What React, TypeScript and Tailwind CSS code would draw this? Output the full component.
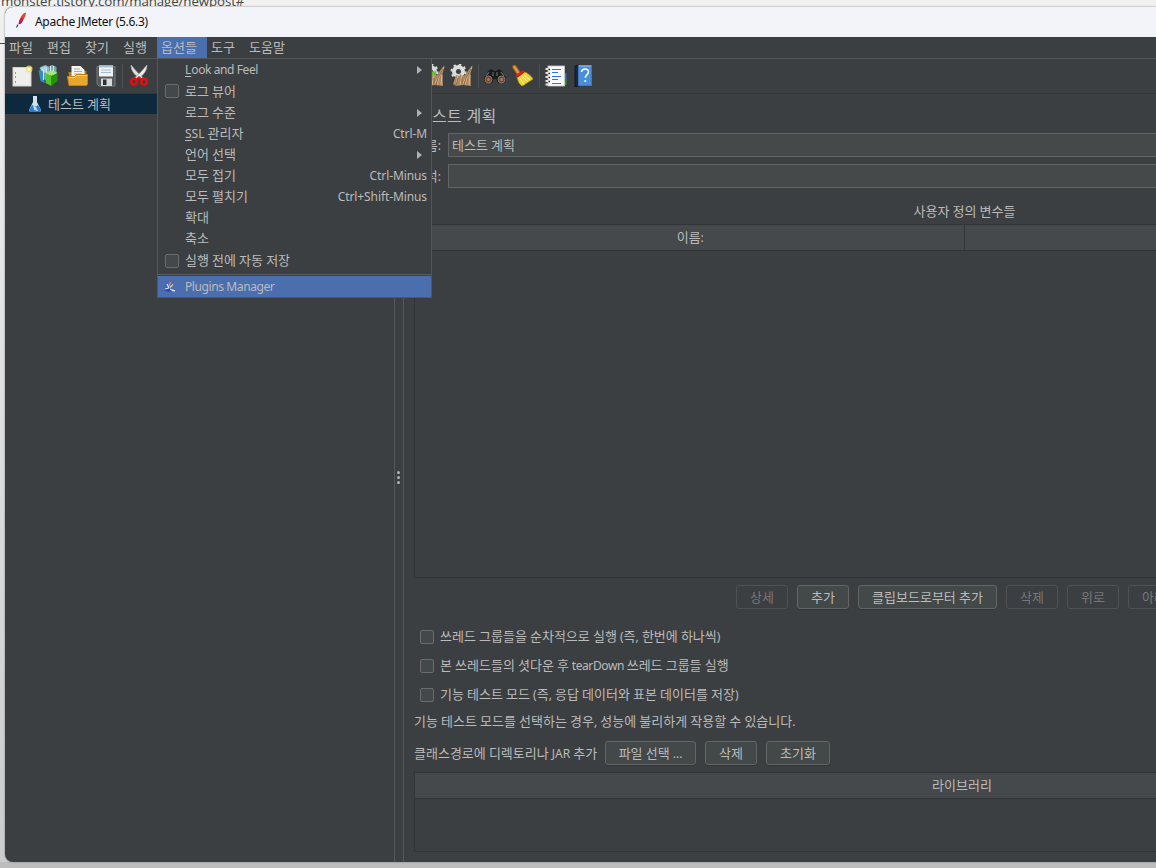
import type { ReactNode } from "react";
import clsx from "clsx";

const sans = "font-['Noto_Sans','Noto_Sans_CJK_KR',sans-serif]";

const menus = ["파일", "편집", "찾기", "실행", "옵션들", "도구", "도움말"];

type Item = {
  label: string;
  mnemonic?: boolean;
  shortcut?: string;
  submenu?: boolean;
  check?: boolean;
  height: string;
};

const items: Item[] = [
  { label: "Look and Feel", mnemonic: true, submenu: true, height: "h-[21px]" },
  { label: "로그 뷰어", check: true, height: "h-[22px]" },
  { label: "로그 수준", submenu: true, height: "h-[21px]" },
  { label: "SSL 관리자", mnemonic: true, shortcut: "Ctrl-M", height: "h-[21px]" },
  { label: "언어 선택", submenu: true, height: "h-[21px]" },
  { label: "모두 접기", shortcut: "Ctrl-Minus", height: "h-[21px]" },
  { label: "모두 펼치기", shortcut: "Ctrl+Shift-Minus", height: "h-[21px]" },
  { label: "확대", height: "h-[21px]" },
  { label: "축소", height: "h-[21px]" },
  { label: "실행 전에 자동 저장", check: true, height: "h-[23px]" },
];

// Hangul is drawn one pixel larger than the latin text around it
function Text({ children }: { children: string }) {
  return (
    <span className="inline-block text-[13px] leading-4 whitespace-pre">
      {children.split(/([\uac00-\ud7a3]+)/).map((part, i) => (
        <span
          key={i}
          className={clsx(i % 2 ? "text-[13px]" : "text-[12px]", /[a-z]{3}/.test(part) && "tracking-[-0.4px]")}
        >
          {part}
        </span>
      ))}
    </span>
  );
}

function Svg({ children }: { children: ReactNode }) {
  return (
    <svg width="24" height="24" viewBox="0 0 24 24" className="shrink-0">
      {children}
    </svg>
  );
}

function Cell({ children }: { children: ReactNode }) {
  return <div className="flex w-7 shrink-0 justify-center">{children}</div>;
}

function Divider() {
  return (
    <div className="flex w-[5px] shrink-0 justify-center">
      <div className="h-6 w-px bg-[#515151]" />
    </div>
  );
}

function Feather() {
  return (
    <svg width="12" height="17" viewBox="0 0 12 17" className="-mt-[3px]">
      <path d="M10.5 1C8 1.500 6 4 4 9.500l-.3 2.300 2 .2C8 9 9.500 6 10.500 1z" fill="#d22128" />
      <path d="M10.700 .5C8.500 1.500 7 3 6 5.500l3 .8C10.300 4 11 2.500 10.700.5z" fill="#e8452c" />
      <path d="M4.500 8 3.500 11.800l2.200.4L7.500 9z" fill="#a3246a" />
      <path d="m3 12.500-1.500 3" stroke="#4b3a8c" strokeWidth="1.200" />
    </svg>
  );
}

function NewIcon() {
  return (
    <Svg>
      <rect x="3" y="3.500" width="18" height="18.500" fill="#eeeeec" stroke="#d0d0cc" />
      <path d="M5.500 8v2M5.500 12v2M5.500 17v2" stroke="#999" />
      <circle cx="19" cy="5" r="3.500" fill="#f3e060" opacity=".75" />
      <circle cx="19" cy="5" r="1.700" fill="#fffbd0" />
    </Svg>
  );
}

function TemplatesIcon() {
  return (
    <Svg>
      <g transform="translate(-1.500 -1)">
        <path d="m4 4 5-2 4 2v11l-4 2-5-3z" fill="#86b4c2" />
        <path d="m13 3 3-1 4 2v8h-8z" fill="#7ba5ad" />
        <path d="M2 7 8 9v11l-4-2z" fill="#2f8fc8" />
        <path d="m3 5 6-2 1 5-2 2z" fill="#a9d2e2" />
        <path d="m5 6 2 1v10M10 4v6M14 3v5M17 3v5" stroke="#d4e7ec" fill="none" />
        <path d="m9 10 7-3 5 3-6 3z" fill="#a6e877" />
        <path d="m9 10 6 3v10l-6-3z" fill="#55c52c" />
        <path d="m15 13 6-3v8l-6 5z" fill="#259409" />
      </g>
    </Svg>
  );
}

function OpenIcon() {
  return (
    <Svg>
      <g transform="translate(-.5 -1)">
        <path d="M3 9h4v-1h14v14H4z" fill="#b77912" />
        <path d="M6 3h9l4 4v9H6z" fill="#f3f3f1" />
        <path d="M8.500 6h6M8.500 8.500h8M8.500 11h8" stroke="#aaaaa8" />
        <path d="M2 13.500h7l2-2h11V21l-1 1.500H3.500z" fill="#e9a62d" stroke="#c48212" />
        <path d="M3 14.500h6.500l2-2h10" stroke="#fbd278" fill="none" />
      </g>
    </Svg>
  );
}

function SaveIcon() {
  return (
    <Svg>
      <g transform="translate(0 -.5)">
        <path d="M3 3h18v19.500H5L3 20.500z" fill="#54585a" stroke="#797d7e" />
        <rect x="5" y="2" width="14" height="11" fill="#f0f3f5" />
        <path d="M5 3h14" stroke="#a9c2da" strokeWidth="2" />
        <path d="M7 6.500h10M7 9h10" stroke="#a9bccb" />
        <rect x="7" y="15" width="11" height="7.500" fill="#d7d9d9" />
        <rect x="9" y="16" width="3.500" height="5.500" fill="#2e3133" />
      </g>
    </Svg>
  );
}

function CutIcon() {
  return (
    <Svg>
      <path d="M4 1c0 6 4 10 8 13l3 2 1.500-2C12 10 8 6 4 1z" fill="#dfe1e1" stroke="#a5a8a8" strokeWidth=".7" />
      <path d="M20 1c0 6-4 10-8 13l-3 2-1.500-2C12 10 16 6 20 1z" fill="#eff0f0" stroke="#a5a8a8" strokeWidth=".7" />
      <ellipse cx="7" cy="17.700" rx="2.800" ry="3" fill="none" stroke="#dc1010" strokeWidth="2.800" />
      <ellipse cx="17" cy="17.700" rx="2.800" ry="3" fill="none" stroke="#dc1010" strokeWidth="2.800" />
      <path d="m9 16 3-2.500 3 2.500" stroke="#dc1010" strokeWidth="2.200" fill="none" />
    </Svg>
  );
}

function ClearIcon({ green }: { green?: boolean }) {
  return (
    <Svg>
      <circle cx="8.500" cy="7.500" r="4.500" fill="none" stroke="#dadcd9" strokeWidth="4" />
      <circle cx="8.500" cy="7.500" r="7" fill="none" stroke="#dadcd9" strokeWidth="2" strokeDasharray="2.500 3" />
      {green && <path d="m7 8 7-1v8H8z" fill="#62c52c" />}
      <path d="m22.500 1-2 9 .5 12-8-1-7 1-3-2 3-9 4 1-1-2 5 2 3-4z" fill="#ad8860" />
      <path d="m22 3-5 10-2 8M8 11 6 20M12 11l-2 10M17 12l-5 9M20 11l-1 10" stroke="#d9b98e" fill="none" />
      <path d="m21 5-5 9-2 7M8 14l-2 7M12 14v7" stroke="#80603e" strokeWidth=".8" fill="none" />
    </Svg>
  );
}

function SearchIcon() {
  return (
    <Svg>
      <path d="m5 7 3-2 3 2h2l3-2 3 2 4 7-1 5h-7l-2-4h-2l-2 4H2l-1-5z" fill="#1a1b1b" />
      <path d="m6 8-3 4M10 8v4M18 8l3 4M14 8v4" stroke="#5d5f60" strokeWidth="1.300" />
      <circle cx="5.500" cy="15.500" r="3.500" fill="#7b4630" stroke="#77797a" />
      <circle cx="18.500" cy="15.500" r="3.500" fill="#7b4630" stroke="#77797a" />
      <circle cx="5.500" cy="15.500" r="1.500" fill="#b07350" />
      <circle cx="18.500" cy="15.500" r="1.500" fill="#b07350" />
    </Svg>
  );
}

function BroomIcon() {
  return (
    <Svg>
      <path d="m3.500 3 4.500 7" stroke="#9c5d19" strokeWidth="4.500" strokeLinecap="round" />
      <path d="m3.500 3 4 6" stroke="#d9974a" strokeWidth="2.500" strokeLinecap="round" />
      <path d="m6 13 7-5c4 1 7 4 9 7L11 22c-3-2-4-5-5-9z" fill="#efd33a" stroke="#bc9a11" strokeWidth=".8" />
      <path d="m9 14 4 7M11 12l6 6M13 11l6 5" stroke="#fff17e" />
      <path d="m5.500 12.500 7-5" stroke="#d32119" strokeWidth="3" />
    </Svg>
  );
}

function FunctionIcon() {
  return (
    <Svg>
      <rect x="19" y="9" width="3.500" height="6" fill="#2a77d8" />
      <rect x="19" y="15" width="3.500" height="6" fill="#27a014" />
      <rect x="4" y="2" width="16.500" height="20" fill="#fafafa" stroke="#c6c8c8" strokeWidth=".8" />
      <path d="M8 5.500h9M8 8.500h6M8 12.500h9M8 15.500h6M8 19.500h9" stroke="#2877dc" />
      <path d="M1.500 5h4M1.500 9h4M1.500 13h4M1.500 17h4M1.500 20.500h4" stroke="#e5e5e5" strokeWidth="1.800" />
      <path d="M4.500 5.500H6M4.500 9.500H6M4.500 13.500H6M4.500 17.500H6" stroke="#222" strokeWidth="1.500" />
    </Svg>
  );
}

function HelpIcon() {
  return (
    <Svg>
      <path d="m3 2 4-1v21l-4 .5z" fill="#1b2734" stroke="#111922" />
      <rect x="6.500" y="1.500" width="13" height="20" fill="#4b8edb" stroke="#3b78c4" />
      <path d="M7 2h12" stroke="#9ac1ed" />
      <path
        d="M9.500 8c.3-4 7-4 7-.2 0 3-3.200 3-3.200 6M13.300 16v2"
        fill="none"
        stroke="#fff"
        strokeWidth="1.600"
      />
    </Svg>
  );
}

function Flask() {
  return (
    <svg width="14" height="18" viewBox="0 0 14 18">
      <path d="M5 1h4v6l4 8-1 2H2l-1-2 4-8z" fill="#d4e1ed" />
      <path d="m4 10-3 5 1 2h10l1-2-3-5-2 1.500z" fill="#2d7dce" />
      <path d="m5 10 1 5 4 1-2-4z" fill="#b8daf6" />
    </svg>
  );
}

function PluginIcon() {
  return (
    <svg width="13" height="12" viewBox="0 0 13 12">
      <path d="m3 1 2 4M1 4l4 3M1.500 6.500 5 8.500" stroke="#3a5bd0" strokeWidth="1.200" />
      <path d="m4 3 2 4M2 8l4-1" stroke="#e2e5ee" strokeWidth="1.200" />
      <path d="M6 5 7.500 1" stroke="#dd8a76" strokeWidth="1.300" />
      <path d="m7 6.500 3-3" stroke="#e3cfac" strokeWidth="1.200" />
      <path d="M7 8.500 12 10" stroke="#dce1f3" strokeWidth="1.500" />
      <path d="m1 9 5-1 3 2-4 .8z" fill="#263fb8" />
    </svg>
  );
}

function Box() {
  return <span className="size-[14px] shrink-0 rounded-[2px] border border-[#6b6b6b] bg-[#43494a]" />;
}

function Button({ label, width, disabled }: { label: string; width: string; disabled?: boolean }) {
  return (
    <button
      disabled={disabled}
      className={clsx(
        "flex h-6 shrink-0 items-center justify-center rounded-[3px] border whitespace-nowrap",
        width,
        disabled ? "border-[#4f5152] text-[#777777]" : "border-[#646666] bg-[#434849] text-[#bbbbbb] shadow-[0_1px_0_#323536]",
      )}
    >
      <Text>{label}</Text>
    </button>
  );
}

function CheckRow({ label }: { label: string }) {
  return (
    <label className="flex h-[29px] items-center gap-[6px] pl-[6px]">
      <Box />
      <Text>{label}</Text>
    </label>
  );
}

function OptionsMenu() {
  return (
    <div className="absolute top-[21px] left-[152px] z-10 w-[275px] border border-[#545657] bg-[#3c3f41]">
      {items.map((item) => (
        <div key={item.label} className={clsx("flex items-center pr-1", item.height)}>
          <span className="flex w-[27px] shrink-0 pl-[7px]">{item.check && <Box />}</span>
          {item.mnemonic && (
            <span className="text-[12px] leading-4 underline underline-offset-2">{item.label[0]}</span>
          )}
          <Text>{item.mnemonic ? item.label.slice(1) : item.label}</Text>
          {item.shortcut && (
            <span className="ml-auto text-[12px] leading-4 tracking-[-0.1px]">{item.shortcut}</span>
          )}
          {item.submenu && (
            <svg width="5" height="8" viewBox="0 0 5 8" className="mr-[5px] ml-auto">
              <path d="M0 0 5 4 0 8z" fill="#afb1b3" />
            </svg>
          )}
        </div>
      ))}
      <div className="flex h-[4px] items-center">
        <div className="h-px w-full bg-[#5a5c5d]" />
      </div>
      <div className="flex h-[21px] items-center bg-[#4b6eaf]">
        <span className="flex w-[27px] pl-[5px]">
          <PluginIcon />
        </span>
        <Text>Plugins Manager</Text>
      </div>
    </div>
  );
}

function Toolbar() {
  return (
    <div className="flex h-[35px] shrink-0 items-center border-b border-[#343739] pl-[3px]">
      <Cell><NewIcon /></Cell>
      <Cell><TemplatesIcon /></Cell>
      <Cell><OpenIcon /></Cell>
      <Cell><SaveIcon /></Cell>
      <Divider />
      <Cell><CutIcon /></Cell>
      <div className="w-[267px] shrink-0" />
      <Cell><ClearIcon green /></Cell>
      <Cell><ClearIcon /></Cell>
      <Divider />
      <Cell><SearchIcon /></Cell>
      <Cell><BroomIcon /></Cell>
      <Divider />
      <Cell><FunctionIcon /></Cell>
      <Cell><HelpIcon /></Cell>
    </div>
  );
}

function Field({ label, value }: { label: string; value?: string }) {
  return (
    <div className="flex h-6 items-center">
      <span className="flex w-[27px] shrink-0 justify-end">
        <Text>{label}</Text>
      </span>
      <div className="ml-[7px] flex h-6 flex-1 items-center border border-[#646464] bg-[#45494a] pl-[3px]">
        {value && <Text>{value}</Text>}
      </div>
    </div>
  );
}

// The editor is wider than the window, its right half runs off screen
function TestPlan() {
  return (
    <div className="flex w-[1101px] shrink-0 flex-col">
      <h1 className="mt-[9px] h-[26px] pl-[3px] text-[16px] leading-[26px] tracking-[0.3px]">테스트 계획</h1>
      <div className="mt-[4px] flex flex-col gap-[7px]">
        <Field label="이름:" value="테스트 계획" />
        <Field label="주석:" />
      </div>
      <div className="mt-[13px] flex h-[23px] justify-center pt-[2px]">
        <Text>사용자 정의 변수들</Text>
      </div>
      <div className="h-[354px] border border-[#323537]">
        <div className="grid h-[26px] grid-cols-2 border-b border-[#323537] bg-[#45494b]">
          <div className="flex items-center justify-center border-r border-[#323537] pl-[2px]">
            <Text>이름:</Text>
          </div>
          <div />
        </div>
      </div>
      <div className="mt-[7px] flex gap-[9px] pl-[322px]">
        <Button label="상세" width="w-[52px]" disabled />
        <Button label="추가" width="w-[52px]" />
        <Button label="클립보드로부터 추가" width="w-[139px]" />
        <Button label="삭제" width="w-[52px]" disabled />
        <Button label="위로" width="w-[52px]" disabled />
        <Button label="아래로" width="w-[64px]" disabled />
      </div>
      <div className="mt-[13px]">
        <CheckRow label="쓰레드 그룹들을 순차적으로 실행 (즉, 한번에 하나씩)" />
        <CheckRow label="본 쓰레드들의 셧다운 후 tearDown 쓰레드 그룹들 실행" />
        <CheckRow label="기능 테스트 모드 (즉, 응답 데이터와 표본 데이터를 저장)" />
      </div>
      <p className="flex h-[24px] items-center">
        <Text>기능 테스트 모드를 선택하는 경우, 성능에 불리하게 작용할 수 있습니다.</Text>
      </p>
      <div className="mt-[8px] flex items-center gap-[9px]">
        <span className="-mr-[2px] flex w-[184px] shrink-0">
          <Text>클래스경로에 디렉토리나 JAR 추가</Text>
        </span>
        <Button label="파일 선택 ..." width="w-[91px]" />
        <Button label="삭제" width="w-[52px]" />
        <Button label="초기화" width="w-[64px]" />
      </div>
      <div className="mt-[7px] h-[80px] border border-[#323537]">
        <div className="flex h-[26px] items-center justify-center border-b border-[#323537] bg-[#45494b] pr-[5px]">
          <Text>라이브러리</Text>
        </div>
      </div>
    </div>
  );
}

export default function App() {
  return (
    <div className={clsx("relative h-[868px] w-[1156px] overflow-hidden bg-[#bdbdbd] text-[#bbbbbb]", sans)}>
      {/* page behind the window */}
      <div className="absolute inset-x-0 top-0 h-[862px] bg-linear-to-b from-[#f1f1f1] to-[#cccccc]">
        <div className="h-2 overflow-hidden pl-px font-['Open_Sans'] text-[13.3px] leading-[3px] tracking-[-0.1px] whitespace-nowrap text-[#444444]">
          monster.tistory.com/manage/newpost#
        </div>
        <div className="mt-[35px] h-px w-[5px] bg-[#444444]" />
      </div>

      <div className="absolute top-[7px] left-[5px] flex h-[855px] w-[1151px] flex-col overflow-hidden rounded-l-[8px] bg-[#3c3f41] shadow-[0_0_2px_#777777]">
        <header className="flex h-[30px] shrink-0 items-center bg-[#f3f3fa] pl-[10px] text-[12px] tracking-[-0.3px] text-[#111111]">
          <Feather />
          <span className="pl-2">Apache JMeter (5.6.3)</span>
        </header>

        <div className="relative flex flex-1 flex-col">
          <nav className="flex h-[22px] shrink-0 border-b border-[#515355]">
            {menus.map((name) => (
              <div
                key={name}
                className={clsx(
                  "flex h-[21px] items-center pl-1",
                  name.length === 3 ? "w-[50px]" : "w-[38px]",
                  name === "옵션들" && "bg-[#4b6eaf]",
                )}
              >
                <Text>{name}</Text>
              </div>
            ))}
          </nav>
          <OptionsMenu />
          <Toolbar />

          <main className="flex flex-1">
            <aside className="w-[389px] shrink-0">
              <div className="flex h-5 items-center bg-[#0d293e] pl-[23px]">
                <Flask />
                <span className="flex pl-[6px]">
                  <Text>테스트 계획</Text>
                </span>
              </div>
            </aside>
            <div className="flex w-[10px] shrink-0 flex-col items-center justify-center gap-[2px] border-x border-[#555758] pr-px pb-[2px]">
              <i className="size-[3px] rounded-full bg-[#afb1b3]" />
              <i className="size-[3px] rounded-full bg-[#afb1b3]" />
              <i className="size-[3px] rounded-full bg-[#afb1b3]" />
            </div>
            <section className="flex flex-1 overflow-hidden pl-[10px]">
              <TestPlan />
            </section>
          </main>
        </div>
      </div>
    </div>
  );
}
